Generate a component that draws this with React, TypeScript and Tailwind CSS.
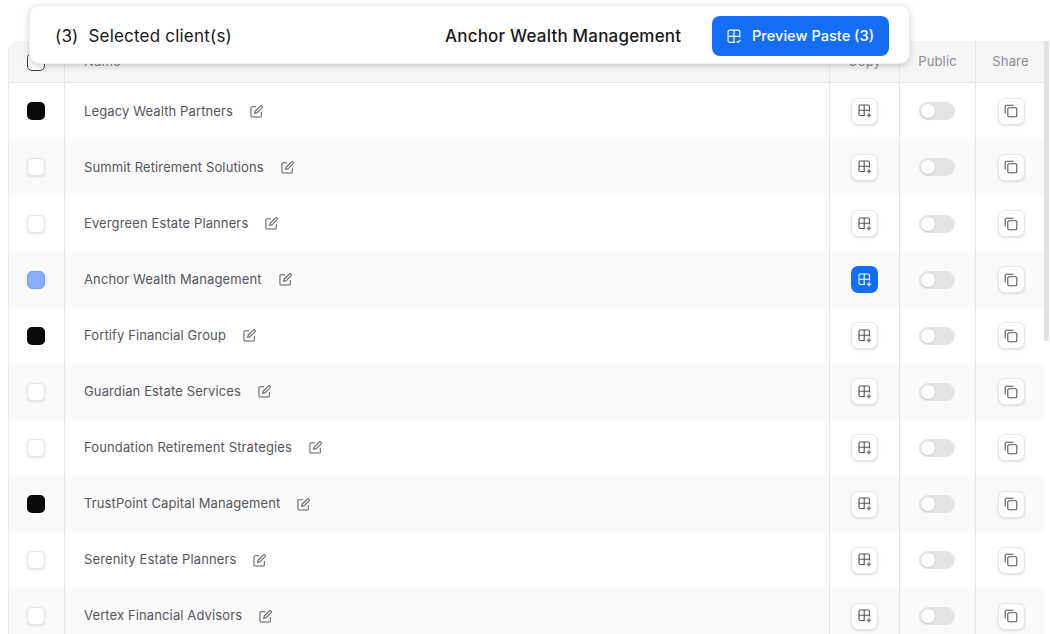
const clients = [
  { name: "Legacy Wealth Partners", state: "on" },
  { name: "Summit Retirement Solutions", state: "off" },
  { name: "Evergreen Estate Planners", state: "off" },
  { name: "Anchor Wealth Management", state: "source" },
  { name: "Fortify Financial Group", state: "on" },
  { name: "Guardian Estate Services", state: "off" },
  { name: "Foundation Retirement Strategies", state: "off" },
  { name: "TrustPoint Capital Management", state: "on" },
  { name: "Serenity Estate Planners", state: "off" },
  { name: "Vertex Financial Advisors", state: "off" },
];

function GridPlus({ className }: { className?: string }) {
  return (
    <svg viewBox="0 0 14 14" fill="none" stroke="currentColor" strokeWidth="1.1" className={className}>
      <path d="M7 11.5H2.5A1.5 1.5 0 0 1 1 10V2.5A1.5 1.5 0 0 1 2.5 1H10a1.5 1.5 0 0 1 1.5 1.5V7.5" />
      <path d="M1 6.2h10.5M6.2 1v10.5" />
      <path d="M8.8 11.2h4.4M11 9v4.4" />
    </svg>
  );
}

function GridCheck({ className }: { className?: string }) {
  return (
    <svg viewBox="0 0 14 14" fill="none" stroke="currentColor" strokeWidth="1.1" className={className}>
      <path d="M7.5 12.5H2.5A1.5 1.5 0 0 1 1 11V2.5A1.5 1.5 0 0 1 2.5 1h8A1.5 1.5 0 0 1 12 2.5V8" />
      <path d="M1 6.8h11M6.5 1v11.5" />
      <path d="M9.2 11.4l1.2 1.1 2.2-2.4" />
    </svg>
  );
}

function CopyIcon() {
  return (
    <svg viewBox="0 0 14 14" fill="none" stroke="currentColor" strokeWidth="1.1" className="w-[14px] h-[14px] text-[#55555c]">
      <rect x="3.8" y="3.8" width="9" height="9" rx="1.2" />
      <path d="M1.2 9.5V2.3A1.1 1.1 0 0 1 2.3 1.2h7.2" />
    </svg>
  );
}

function EditIcon() {
  return (
    <svg viewBox="0 0 14 14" fill="none" stroke="currentColor" strokeWidth="1.1" className="w-[13px] h-[13px] text-[#5c5c63]">
      <path d="M6.5 1.8H2.2A1.2 1.2 0 0 0 1 3v8.8A1.2 1.2 0 0 0 2.2 13H11a1.2 1.2 0 0 0 1.2-1.2V7.5" />
      <path d="M11 1.1a1.3 1.3 0 0 1 1.9 1.9L7.5 8.4l-2.5.6.6-2.5L11 1.1z" />
    </svg>
  );
}

function Toggle() {
  return (
    <div className="w-[36px] h-[18px] rounded-full bg-[#e4e4e6] p-[2px] flex items-center">
      <div className="w-[14px] h-[14px] rounded-full bg-white shadow-sm" />
    </div>
  );
}

function Checkbox({ state }: { state: string }) {
  if (state === "on") return <div className="w-[18px] h-[18px] rounded-[5px] bg-[#09090b]" />;
  if (state === "source")
    return <div className="w-[18px] h-[18px] rounded-[5px] bg-[#85aefc] border border-[#6f9ffb]" />;
  return <div className="w-[18px] h-[18px] rounded-[5px] bg-white border border-[#e6e6e8] shadow-sm" />;
}

export default function App() {
  return (
    <div className="relative w-[1050px] h-[634px] overflow-hidden bg-white font-['Inter',sans-serif]">
      {/* floating paste bar */}
      <div className="absolute left-[29px] top-[5px] z-10 w-[881px] h-[59px] pt-[2px] bg-white rounded-[10px] border border-[#f0f0f1] shadow-[0_2px_6px_rgba(0,0,0,0.18)] flex items-center pl-[25px] pr-[20px]">
        <span className="text-[17px] tracking-[0.2px] pt-[3px] text-[#18181b] w-[390px] whitespace-pre">(3)  Selected client(s)</span>
        <span className="text-[17px] tracking-[0.2px] pt-[3px] font-medium text-[#18181b] flex-1">Anchor Wealth Management</span>
        <button className="w-[177px] h-[40px] pt-[2px] rounded-[8px] bg-[#146ef5] text-white text-[14.6px] font-[450] flex items-center justify-center gap-[10px]">
          <GridCheck className="w-[15px] h-[15px]" />
          Preview Paste (3)
        </button>
      </div>

      <div className="flex pl-[8px] pt-[41px] h-full">
        <div className="w-[1036px] border-l border-[#ececee] rounded-tl-[10px] overflow-hidden">
          {/* header */}
          <div className="flex h-[42.3px] bg-[#f5f5f6] border-b border-[#e6e6e8] text-[13px] tracking-[0.15px] text-[#8a8a91]">
            <div className="w-[56px] shrink-0 border-r border-[#e6e6e8] pr-[1px] flex items-center justify-center">
              <div className="w-[18px] h-[18px] rounded-[5px] border border-[#3f3f46] bg-white" />
            </div>
            <div className="flex-1 pl-[19px] flex items-center">Name</div>
            <div className="w-[70px] border-l border-[#e6e6e8] flex items-center justify-center">Copy</div>
            <div className="w-[76px] border-l border-[#e6e6e8] flex items-center justify-center">Public</div>
            <div className="w-[69px] border-l border-[#e6e6e8] pl-[1px] flex items-center justify-center">Share</div>
          </div>
          {/* rows */}
          {clients.map((c, i) => (
            <div key={c.name} className={`flex h-[56.1px] ${i % 2 === 1 ? "bg-[#fafafa]" : "bg-white"}`}>
              <div className="w-[56px] shrink-0 border-r border-[#e6e6e8] pr-[1px] flex items-center justify-center">
                <Checkbox state={c.state} />
              </div>
              <div className="flex-1 pl-[19px] flex items-center gap-[17px] text-[13px] tracking-[0.12px] text-[#55555c]">
                <span>{c.name}</span>
                <EditIcon />
              </div>
              <div className="w-[70px] border-l border-[#e6e6e8] flex items-center justify-center">
                {c.state === "source" ? (
                  <div className="w-[27px] h-[27px] rounded-[7px] bg-[#146ef5] flex items-center justify-center">
                    <GridPlus className="w-[14px] h-[14px] text-white" />
                  </div>
                ) : (
                  <div className="w-[27px] h-[27px] rounded-[7px] bg-white border border-[#e6e6e8] shadow-sm flex items-center justify-center">
                    <GridPlus className="w-[14px] h-[14px] text-[#55555c]" />
                  </div>
                )}
              </div>
              <div className="w-[76px] border-l border-[#e6e6e8] pr-[2px] flex items-center justify-center">
                <Toggle />
              </div>
              <div className="w-[69px] border-l border-[#e6e6e8] pl-[2px] flex items-center justify-center">
                <div className="w-[27px] h-[27px] rounded-[7px] bg-white border border-[#e6e6e8] shadow-sm flex items-center justify-center">
                  <CopyIcon />
                </div>
              </div>
            </div>
          ))}
        </div>
        {/* scrollbar */}
        <div className="w-[5px] h-[300px] bg-[#e2e2e4]" />
      </div>
    </div>
  );
}
